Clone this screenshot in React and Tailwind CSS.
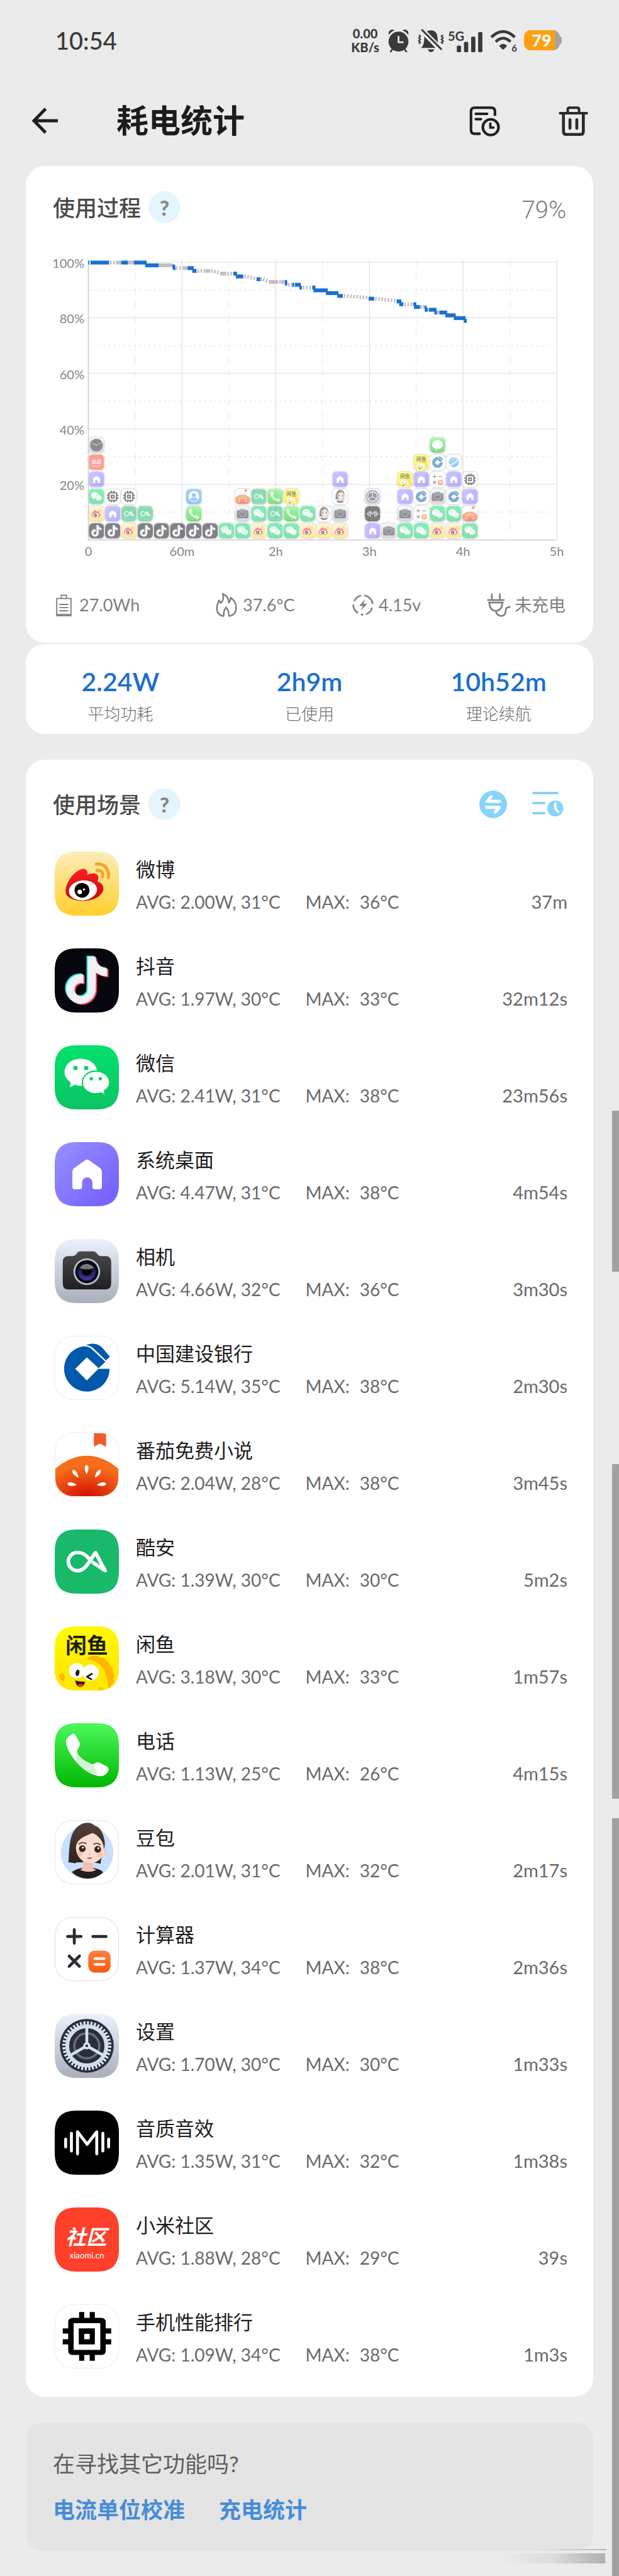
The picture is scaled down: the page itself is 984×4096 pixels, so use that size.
import React from "react";

/* ---------- shared artwork for the application icons ---------- */

function Tile({ id, fill, border, children }) {
  return (
    <symbol id={"app-" + id} viewBox="0 0 100 100">
      <g clipPath="url(#tile-clip)">
        <rect width="100" height="100" fill={fill} />
        {children}
      </g>
      {border ? (
        <rect x="0.5" y="0.5" width="99" height="99" rx="28" fill="none" stroke={border} strokeWidth="1" />
      ) : null}
    </symbol>
  );
}

function Grad({ id, from, to, diagonal }) {
  return (
    <linearGradient id={id} x1="0" y1="0" x2={diagonal ? "1" : "0"} y2="1">
      <stop offset="0" stopColor={from} />
      <stop offset="1" stopColor={to} />
    </linearGradient>
  );
}

const NOTE =
  "M12.525.02c1.31-.02 2.61-.01 3.91-.02.08 1.53.63 3.09 1.75 4.17 1.12 1.11 2.7 1.62 4.24 1.79v4.03c-1.44-.05-2.89-.35-4.2-.97-.57-.26-1.1-.59-1.62-.93-.01 2.92.01 5.84-.02 8.75-.08 1.4-.54 2.79-1.35 3.94-1.31 1.92-3.58 3.17-5.91 3.21-1.43.08-2.86-.31-4.08-1.03-2.02-1.19-3.44-3.37-3.65-5.71-.02-.5-.03-1-.01-1.49.18-1.9 1.12-3.72 2.58-4.96 1.66-1.44 3.98-2.13 6.15-1.72.02 1.48-.04 2.96-.04 4.44-.99-.32-2.15-.23-3.02.37-.63.41-1.11 1.04-1.36 1.75-.21.51-.15 1.07-.14 1.61.24 1.64 1.82 3.02 3.5 2.87 1.12-.01 2.19-.66 2.77-1.61.19-.33.4-.67.41-1.06.1-1.79.06-3.57.07-5.36.01-4.03-.01-8.05.02-12.07z";

function AppSprite() {
  return (
    <svg className="absolute size-0" aria-hidden="true">
      <defs>
        <clipPath id="tile-clip">
          <path d="M0 34 C0 11 11 0 34 0 H66 C89 0 100 11 100 34 V66 C100 89 89 100 66 100 H34 C11 100 0 89 0 66 Z" />
        </clipPath>
        <Grad id="g-weibo" from="#fcedba" to="#ffd02c" />
        <Grad id="g-weibo-red" from="#ff1f24" to="#c9070c" />
        <Grad id="g-wechat" from="#04e16e" to="#0ac463" />
        <Grad id="g-home" from="#9791ff" to="#725cff" diagonal />
        <Grad id="g-steel" from="#ebf2fd" to="#a9afba" />
        <Grad id="g-body" from="#4a4a4c" to="#1f1f20" />
        <Grad id="g-lens" from="#0a0a10" to="#4437a8" />
        <Grad id="g-phone" from="#4cf85e" to="#00b700" />
        <Grad id="g-calc" from="#fd8246" to="#fa5a0e" />
        <Grad id="g-contact" from="#45a9f3" to="#1f86ea" />
        <Grad id="g-fish" from="#fffb00" to="#ffe200" />
        <Grad id="g-globe" from="#53c7ff" to="#1d86ea" />
        <Grad id="g-hair" from="#54403a" to="#2e2220" />
        <radialGradient id="g-tomato" cx="0.5" cy="1" r="0.75">
          <stop offset="0" stopColor="#d40d02" />
          <stop offset="1" stopColor="#f66d1b" />
        </radialGradient>
      </defs>

      <Tile id="weibo" fill="url(#g-weibo)">
        <path d="M17 62 C17 49 28 33 41 27.5 C48 25 53 30 50.5 36.5 C58 32.5 67 33.5 68 39.5 C68.3 42 67.5 44 66.5 46.5 C73 48.500 77 54 75.500 60 C73 70 60 77 43 77 C28 76.500 17 71 17 62Z" fill="url(#g-weibo-red)" />
        <ellipse cx="44" cy="60.500" rx="22" ry="15.500" fill="#fff" transform="rotate(-7 44 60.500)" />
        <circle cx="42.500" cy="60.500" r="11.600" fill="#000" />
        <circle cx="39" cy="63" r="3.600" fill="#fff" />
        <circle cx="45.500" cy="59" r="1.700" fill="#fff" />
        <path d="M65 19.500 C77 18 85.500 28 83.500 40.500" fill="none" stroke="#f6a527" strokeWidth="5" strokeLinecap="round" />
        <path d="M66 29.500 C72 28.500 76.500 33.500 74.500 39" fill="none" stroke="#f6a527" strokeWidth="5" strokeLinecap="round" />
      </Tile>

      <Tile id="douyin" fill="#07080f">
        <path d={NOTE} fill="#25f0e6" transform="translate(11.300 11.500) scale(3.060)" />
        <path d={NOTE} fill="#ee3459" transform="translate(15.300 14.500) scale(3.060)" />
        <path d={NOTE} fill="#f1f0f3" transform="translate(13.300 13) scale(3.060)" />
      </Tile>

      <Tile id="wechat" fill="url(#g-wechat)">
        <path d="M40.500 21 C26 21 15.300 30 15.300 42 C15.300 48.500 19 54 25 58 L23.500 65.500 L31.500 61.500 C35 62.800 38 63.200 41 63.200 C55 63 66 54 66 42 C66 30 55 21 40.500 21Z" fill="#fff" />
        <path d="M64.300 40.300 C76 40.300 85.500 48 85.500 58 C85.500 63.500 82.500 68 77.500 71 L78.500 77.500 L72 74.300 C69.500 75.200 67 75.600 64.300 75.600 C52.500 75.600 43 68 43 58 C43 48 52.500 40.300 64.300 40.300Z" fill="#fff" stroke="#08d267" strokeWidth="2" />
        <circle cx="32.300" cy="35.500" r="3.400" fill="#08d267" />
        <circle cx="49" cy="35.500" r="3.400" fill="#08d267" />
        <circle cx="57" cy="52.300" r="2.700" fill="#08d267" />
        <circle cx="71" cy="52.300" r="2.700" fill="#08d267" />
      </Tile>

      <Tile id="home" fill="url(#g-home)">
        <path d="M46.500 29 Q50.500 25.500 54.500 29 L70 40 Q73.500 43 73.500 47 V69.500 Q73.500 73.500 69.500 73.500 H63 Q58.700 73.500 58.700 70 V63 A8.100 8.100 0 0 0 42.500 63 V70 Q42.500 73.500 38.500 73.500 H31 Q27.500 73.500 27.500 69.500 V47 Q27.500 43 31 40 Z" fill="#fff" />
      </Tile>

      <Tile id="camera" fill="url(#g-steel)">
        <path d="M21 26.600 H28 C31 26.600 32 25.500 34 23 C36 20.500 37 19.400 40 19.400 H60 C63 19.400 64 20.500 66 23 C68 25.500 69 26.600 72 26.600 H79 Q88 26.600 88 36 V69 Q88 78.600 79 78.600 H21 Q12.500 78.600 12.500 69 V36 Q12.500 26.600 21 26.600Z" fill="url(#g-body)" />
        <circle cx="50" cy="51" r="20.800" fill="#b4c1d6" />
        <circle cx="50" cy="51" r="18" fill="#07070c" />
        <circle cx="50" cy="51" r="14" fill="url(#g-lens)" />
        <circle cx="50" cy="49.500" r="8" fill="#030306" />
        <path d="M39 45 Q50 33 61 45 Q50 50 39 45Z" fill="#fff" opacity="0.450" />
      </Tile>

      <Tile id="ccb" fill="#ffffff" border="#ededf0">
        <path d="M85.500 51.500 A35.500 35.500 0 1 1 44 16.500 Q51 15.500 57 20 L79 40.500 L68.500 50.500 L50 33.500 L32 51.500 L50 69.500 L68 51.500Z" fill="#0059ad" />
        <path d="M48 14.800 Q54 11.700 62 12.500 Q69 13.500 74 18.500 L86 32.500 L79.800 38.500 L59 18.500 Q54 14.500 48 14.800Z" fill="#0059ad" />
      </Tile>

      <Tile id="tomato" fill="#ffffff" border="#ededf0">
        <path d="M0 57 Q24 36 50 36 T100 57 V100 H0Z" fill="url(#g-tomato)" />
        <path d="M61 0 H80 V22 L70.500 17 L61 22Z" fill="#ef5a2b" />
        {[[-84, 27, 80.500], [-38, 32.500, 64], [0, 49.700, 57.500], [38, 67, 64], [84, 73, 80.500]].map(([a, x, y]) => (
          <path key={a} d="M0 7.500 C-4 1 -3.500 -7 0 -7 C3.500 -7 4 1 0 7.500Z" fill="#fff" transform={`translate(${x} ${y}) rotate(${a})`} />
        ))}
      </Tile>

      <Tile id="coolapk" fill="#19b96b">
        <path d="M53 45 C47 38 42 35.800 35.500 35.800 A14.200 14.200 0 0 0 35.500 64.300 C49 64.300 55 47 63.500 36 L78.500 64 C72 60 66 55.500 60 51.500" fill="none" stroke="#fff" strokeWidth="5.600" strokeLinecap="round" strokeLinejoin="round" />
      </Tile>

      <Tile id="xianyu" fill="url(#g-fish)">
        <path d="M50 50 Q53 47 60 46 Q68 45 71 49 Q78 48 80 54 Q86 56 86 62 Q92 65 90 71 Q95 76 91 81 Q94 88 88 91 L84 100 H60 Z" fill="#ffb400" />
        <path d="M14 100 V80 Q18 52 46 51 Q82 51 84 100Z" fill="#ffe900" />
        <path d="M7 76 Q12 70 16 77 L14 87 Q6 82 7 76Z" fill="#ffb400" />
        <circle cx="34" cy="69" r="12" fill="#fff" />
        <circle cx="56" cy="72" r="12.500" fill="#fff" />
        <ellipse cx="35.500" cy="72.500" rx="3" ry="5" fill="#1a1616" transform="rotate(12 35.500 72.500)" />
        <path d="M58 74 L50 78.500 L57 82.500" fill="none" stroke="#1a1616" strokeWidth="2.600" strokeLinecap="round" strokeLinejoin="round" />
        <path d="M32 84 Q40 87 47.500 86 Q45 95 39 94.500 Q33 93 32 84Z" fill="#4a0d0a" />
        <path d="M36 91.500 Q40 88 44.500 91.500 Q42 95 39 94.500Z" fill="#ef3a2d" />
        <path d="M66 100 Q67 94 73 94 Q77 95 77 100Z" fill="#ffc800" />
      </Tile>

      <Tile id="phone" fill="url(#g-phone)">
        <path d="M26.500 17.500 Q30 15 32.500 19 L39 30.500 Q40.500 33.500 38 36.500 L35.500 41 Q34 45.500 37 49.500 Q44 58 55 62.500 Q59 65 62.500 62.500 Q66 59.500 70 61.500 L82 68 Q85.500 70.500 83 75 Q78 84 69 82.500 Q50 79 35 62 Q20 45 17.500 30 Q17 23 26.500 17.500Z" fill="#fff" />
        <path d="M32 57 L35.500 44 Q37 52 46 58.500 Q52 63 60 64 L67 80 Q45 76 32 57Z" fill="#7fe987" opacity="0.350" />
      </Tile>

      <Tile id="doubao" fill="#ffffff" border="#e3e4e8">
        <circle cx="50.400" cy="50.500" r="41" fill="#c8e0fd" />
        <path d="M21.500 66 C23 40 23 26 32 14 C42 2 56 2 62 8.500 C72 11 76 22 78 34 C79 46 72 56 71.500 68 L60 66 H34 L32 67.500 Q26 66 21.500 66Z" fill="url(#g-hair)" />
        <path d="M26.500 81 Q36 75 42 75 H62 Q72 77 75.500 81.500 Q64 91.500 50.400 91.500 Q36 91 26.500 81Z" fill="#221d1e" />
        <path d="M44 62 H59 L59.500 75 Q62 77 65 77.500 Q54 84 39 77.500 Q43 77 43.500 74Z" fill="#f3c1ad" />
        <circle cx="77" cy="50.500" r="5" fill="#f6cdbc" />
        <path d="M33 42 C35 28 48 25 59 20 C68 24 77 33 77 48 C76 59 66 67 56 67 C44 67 33 58 33 42Z" fill="#fbdccf" />
        <circle cx="43" cy="44.500" r="5.200" fill="#38231f" />
        <circle cx="67" cy="45.500" r="5.200" fill="#38231f" />
        <circle cx="44" cy="43" r="1.500" fill="#fff" />
        <circle cx="68" cy="44" r="1.500" fill="#fff" />
        <path d="M38 37 Q43 33.500 49 36.500 M61 37.500 Q66 35 71 38.500" fill="none" stroke="#5a3d35" strokeWidth="1.700" strokeLinecap="round" />
        <circle cx="39.500" cy="53" r="4" fill="#f7a99a" opacity="0.500" />
        <circle cx="70" cy="54" r="4" fill="#f7a99a" opacity="0.500" />
        <path d="M50 59 Q54.500 56.500 59 59 Q54.500 63 50 59Z" fill="#d9675b" />
        <path d="M53 53 Q54.500 54.500 56 53" fill="none" stroke="#e0a08c" strokeWidth="1.200" />
      </Tile>

      <Tile id="calc" fill="#ffffff" border="#dedfe2">
        <path d="M20 30.500 H41 M30.500 20 V41 M59.500 30.500 H80 M22.500 61 L38.500 77 M38.500 61 L22.500 77" stroke="#2b2c33" strokeWidth="4.600" strokeLinecap="round" />
        <rect x="52.300" y="52.400" width="34.700" height="34.300" rx="10" fill="url(#g-calc)" />
        <path d="M62.500 65 H77 M62.500 74 H77" stroke="#fff" strokeWidth="4" strokeLinecap="round" />
      </Tile>

      <Tile id="settings" fill="url(#g-steel)">
        <circle cx="50" cy="50" r="42" fill="#2a2e3b" />
        <circle cx="50" cy="50" r="35.500" fill="none" stroke="#dce6f3" strokeWidth="5.400" strokeDasharray="3.100 2.476" />
        <circle cx="50" cy="50" r="30.500" fill="none" stroke="#d3deec" strokeWidth="6" />
        <circle cx="50" cy="50" r="19.500" fill="none" stroke="#686c77" strokeWidth="3.600" />
        <path d="M50 50 V22 M50 50 L25.700 64 M50 50 L74.300 64" stroke="#d6e1ef" strokeWidth="4.500" />
        <circle cx="50" cy="50" r="5.600" fill="#d6e1ef" />
        <circle cx="50" cy="50" r="2" fill="#1b1d25" />
      </Tile>

      <Tile id="sound" fill="#000000">
        <path d="M17 44.500 V56.500 M26 35.500 V63 M75 35.500 V63 M84 44.500 V56.500" stroke="#fff" strokeWidth="4.600" strokeLinecap="round" />
        <path d="M35.500 67.500 V33 L50.500 52.500 L65.500 33 V67.500" fill="none" stroke="#fff" strokeWidth="4.600" strokeLinecap="round" strokeLinejoin="round" />
      </Tile>

      <Tile id="community" fill="#ff402a" />

      <Tile id="cpu" fill="#ffffff" border="#ededf0">
        <path d="M38 12 H46 V21 H54.500 V12 H62.500 V21 H72 Q79.500 21 79.500 28 V37.500 H88 V45.500 H79.500 V54.500 H88 V62.500 H79.500 V72 Q79.500 79 72 79 H62.500 V88 H54.500 V79 H46 V88 H38 V79 H28.500 Q21 79 21 72 V62.500 H12.500 V54.500 H21 V45.500 H12.500 V37.500 H21 V28 Q21 21 28.500 21 H38Z M29.500 29.500 V71 H71 V29.500Z M37.500 37.500 H62.500 V62.500 H37.500Z M46 46 V54.500 H54.500 V46Z" fill="#000" fillRule="evenodd" />
      </Tile>

      <Tile id="clock" fill="url(#g-steel)">
        <circle cx="50" cy="50" r="42" fill="#1d1d1f" />
        <path d="M50 52 L24 39 M50 52 L84 33" stroke="#fff" strokeWidth="3" strokeLinecap="round" />
        <path d="M50 12 V17 M50 83 V88 M12 50 H17 M83 50 H88" stroke="#fff" strokeWidth="2" />
      </Tile>

      <Tile id="contact" fill="url(#g-contact)">
        <circle cx="50" cy="50" r="35" fill="#fff" />
        <circle cx="50" cy="40" r="13" fill="#2f95ee" />
        <path d="M24 70 Q30 56 50 56 Q70 56 76 70 Q66 80 50 80 Q34 80 24 70Z" fill="#2f95ee" />
      </Tile>

      <Tile id="message" fill="url(#g-phone)">
        <path d="M50 18 C69 18 85 30 85 47 C85 64 69 75 52 75 Q44 84 35 84 Q38 79 37 73 C24 69 15 60 15 47 C15 30 31 18 50 18Z" fill="#fff" />
      </Tile>

      <Tile id="browser" fill="#ffffff" border="#dfe0e4">
        <circle cx="51" cy="49" r="33" fill="url(#g-globe)" />
        <path d="M14 80 Q10 72 40 58 Q72 40 86 20 Q92 30 62 54 Q30 78 14 80Z" fill="#d9effc" />
      </Tile>
    </svg>
  );
}

function AppIcon({ name, ...rest }) {
  return (
    <svg viewBox="0 0 100 100" aria-hidden="true" {...rest}>
      <use href={"#app-" + name} />
      {name === "xianyu" ? (
        <text x="50" y="42" textAnchor="middle" fontSize="33" fontWeight="700" fill="#1d1c08" fontFamily="Noto Sans CJK SC">闲鱼</text>
      ) : null}
      {name === "community" ? (
        <>
          <text x="49" y="58" textAnchor="middle" fontSize="32" fontWeight="700" fontStyle="italic" fill="#fff" fontFamily="Noto Sans CJK SC">社区</text>
          <text x="50" y="79" textAnchor="middle" fontSize="13" fill="#fff" fontFamily="Lato">xiaomi.cn</text>
        </>
      ) : null}
    </svg>
  );
}

/* ---------- status bar ---------- */

function StatusBar() {
  return (
    <div className="flex h-[128px] items-center justify-between pr-[91px] pl-[88px] text-[#3a3a3a]">
      <time className="text-[38px] leading-[48px] font-medium">10:54</time>
      <div className="flex items-center">
        <div className="mr-[14px] text-center text-[20px] leading-[22px] font-black">
          <div>0.00</div>
          <div>KB/s</div>
        </div>
        <svg viewBox="0 0 120 136" className="mr-[14px] h-[37px] w-[33px]" fill="#3a3a3a" aria-hidden="true">
          <circle cx="60" cy="74" r="58" />
          <path d="M2 30 A22 22 0 0 1 36 8 Q18 15 4 34Z M118 30 A22 22 0 0 0 84 8 Q102 15 116 34Z" />
          <path d="M24 118 L14 134 M96 118 L106 134" stroke="#3a3a3a" strokeWidth="10" strokeLinecap="round" />
          <path d="M60 46 V78 H84" fill="none" stroke="#ebebeb" strokeWidth="10" strokeLinecap="square" />
        </svg>
        <svg viewBox="0 0 156 136" className="mr-[6px] h-[37px] w-[42px]" aria-hidden="true">
          <path d="M20 112 Q36 98 38 66 C38 24 52 8 78 8 C104 8 118 24 118 66 Q119 98 136 112Z" fill="#3a3a3a" />
          <path d="M60 120 H98 Q92 136 78 136 Q66 136 60 120Z" fill="#3a3a3a" />
          <path d="M16 -2 L148 132" stroke="#ebebeb" strokeWidth="32" />
          <path d="M26 6 L138 118" stroke="#3a3a3a" strokeWidth="11" strokeLinecap="round" />
          <path d="M8 34 L16 43 L6 52 L16 61 L6 70 L16 79 L6 86 M148 34 L140 43 L150 52 L140 61 L150 70 L140 79 L150 86" fill="none" stroke="#3a3a3a" strokeWidth="8" />
        </svg>
        <div className="flex items-start">
          <span className="h-[37px] text-[20px] leading-[22px] font-bold">5G</span>
          <svg viewBox="0 0 150 118" className="mt-[5px] -ml-[12px] h-[32px] w-[41px]" fill="#3a3a3a" aria-hidden="true">
            <rect x="0" y="79" width="25" height="39" rx="6" />
            <rect x="42" y="57" width="25" height="61" rx="6" />
            <rect x="84" y="27" width="25" height="91" rx="6" />
            <rect x="125" y="0" width="25" height="118" rx="6" />
          </svg>
        </div>
        <div className="relative ml-[12px]">
          <svg viewBox="0 0 158 120" className="h-[32px] w-[42px]" aria-hidden="true">
            <path d="M8 42 Q42 8 78 8 Q114 8 148 42" fill="none" stroke="#3a3a3a" strokeWidth="17" />
            <path d="M34 69 Q56 48 78 48 Q100 48 122 69" fill="none" stroke="#3a3a3a" strokeWidth="17" />
            <path d="M54 94 Q66 82 78 82 Q90 82 102 94 L84 113 Q78 118 72 113Z" fill="#3a3a3a" />
          </svg>
          <span className="absolute -right-[1px] -bottom-[4px] text-[15px] leading-[16px] font-bold">6</span>
        </div>
        <div className="ml-[12px] flex items-center">
          <div className="flex h-[32px] w-[57px] overflow-hidden rounded-[11px] bg-[#a3a3a1]">
            <span className="flex w-[49px] items-center justify-center bg-[#fe9f12] pl-[7px] text-[27px] leading-[32px] font-black text-white">79</span>
          </div>
          <span className="h-[12px] w-[3px] rounded-r-[3px] bg-[#a3a3a1]" />
        </div>
      </div>
    </div>
  );
}

/* ---------- title bar ---------- */

function TitleBar() {
  return (
    <header className="mb-[8px] flex h-[128px] items-center pr-[48px] pl-[50px]">
      <button type="button" aria-label="返回" className="mr-[91px]">
        <svg viewBox="0 0 44 44" className="size-[44px]" fill="none" stroke="#1f1f1f" strokeWidth="5" aria-hidden="true">
          <path d="M42 22 H4 M22.500 3 L4 22 L22.500 41" />
        </svg>
      </button>
      <h1 className="flex-1 text-[51px] leading-[64px] font-bold text-[#1c1c1c]">耗电统计</h1>
      <button type="button" aria-label="历史记录" className="mr-[92px]">
        <svg viewBox="0 0 180 180" className="size-[49px]" fill="none" stroke="#1f1f1f" strokeWidth="15" strokeLinecap="round" aria-hidden="true">
          <path d="M150 60 V34 Q150 12 128 12 H32 Q10 12 10 34 V142 Q10 164 32 164 H66" strokeLinecap="butt" />
          <path d="M38 48 H104 M38 79 H68" />
          <circle cx="125" cy="126" r="46" />
          <path d="M123 104 V128 H141" strokeWidth="14" />
        </svg>
      </button>
      <button type="button" aria-label="删除">
        <svg viewBox="0 0 180 180" className="size-[49px]" fill="none" stroke="#2b2b2b" strokeLinecap="round" strokeLinejoin="round" aria-hidden="true">
          <path d="M12 44 H168 M57 42 V22 Q57 12 68 12 H112 Q123 12 123 22 V42" strokeWidth="15" />
          <path d="M32 48 V152 Q32 168 50 168 H130 Q148 168 148 152 V48" strokeWidth="17" />
          <path d="M70 82 V132 M110 82 V132" strokeWidth="17" />
        </svg>
      </button>
    </header>
  );
}

function HelpButton({ label }) {
  return (
    <button type="button" aria-label={label} className="flex size-[51px] items-center justify-center rounded-full bg-[#e5f5fe] text-[33px] leading-[40px] font-black text-[#868686]">
      ?
    </button>
  );
}

/* ---------- battery chart ---------- */

const PLOT = { left: 99.5, right: 844, top: 17, bottom: 458.5 };
const SAMPLES = 1270;
const sampleX = (s) => PLOT.left + ((PLOT.right - PLOT.left) * s) / SAMPLES;
const levelY = (l) => PLOT.bottom - ((PLOT.bottom - PLOT.top) * l) / 100;

/* [first sample, last sample, battery level] while the screen is on */
const SCREEN_ON = [
  [0, 3, 100], [6, 56, 100], [89, 107, 100], [123, 158, 100], [154, 191, 99], [228, 235, 98.6], [229, 236, 98],
  [269, 286, 98], [282, 293, 97], [393, 403, 96], [400, 420, 95], [456, 466, 94], [533, 539, 93], [533, 539, 92.4],
  [553, 558, 92], [560, 576, 92], [572, 579, 91], [607, 616, 91], [610, 649, 90], [644, 678, 89], [675, 690, 88],
  [760, 775, 87], [836, 849, 86], [843, 854, 85], [881, 889, 85], [883, 899, 84], [912, 917, 83.8], [912, 920, 83],
  [924, 944, 83], [938, 945, 82], [952, 973, 82], [968, 996, 81], [991, 1023, 80], [1018, 1026, 79],
];
const IDLE = [
  [75, 89, 100], [107, 123, 100], [191, 228, 99], [256, 269, 98], [318, 330, 97], [357, 374, 96], [466, 471, 94],
  [489, 515, 93], [523, 533, 93], [899, 905, 84], [920, 924, 83], [945, 952, 82],
];
/* [first sample, last sample, level at start, level at end] while asleep */
const ASLEEP = [
  [56, 75, 100, 100], [235, 256, 98, 98], [293, 318, 97, 97], [330, 357, 97, 96.2], [374, 393, 96, 96],
  [420, 456, 95, 94.2], [471, 489, 94, 93.2], [515, 523, 93, 93], [539, 553, 92, 92], [579, 607, 91, 91],
  [690, 760, 88, 87.3], [775, 836, 87, 86.2], [854, 881, 85, 85], [905, 912, 84, 84],
];

const COLUMNS = [
  ["douyin", "weibo", "wechat", "home", "community", "clock"],
  ["douyin", "home", "cpu"],
  ["weibo", "coolapk", "cpu"],
  ["douyin", "coolapk"],
  ["douyin"],
  ["douyin"],
  ["douyin", "phone", "contact"],
  ["douyin"],
  ["wechat"],
  ["wechat", "camera", "tomato"],
  ["weibo", "wechat", "coolapk"],
  ["wechat", "coolapk", "phone"],
  ["wechat", "phone", "xianyu"],
  ["weibo", "wechat"],
  ["weibo", "doubao"],
  ["weibo", "camera", "doubao", "home"],
  [],
  ["home", "sound", "settings"],
  ["camera"],
  ["wechat", "camera", "home", "xianyu"],
  ["wechat", "calc", "ccb", "home", "xianyu"],
  ["weibo", "wechat", "camera", "calc", "ccb", "message"],
  ["weibo", "wechat", "ccb", "home", "browser"],
  ["wechat", "tomato", "home", "cpu"],
];

function BatteryChart() {
  const hour = (PLOT.right - PLOT.left) / 5;
  return (
    <svg viewBox="0 0 902 500" className="mt-[45px] w-full" role="img" aria-label="电量变化" fontFamily="Lato, sans-serif">
      {[100, 80, 60, 40, 20].map((l) => (
        <g key={l}>
          <line x1={PLOT.left} x2={PLOT.right} y1={levelY(l)} y2={levelY(l)} stroke="#e6e6e6" strokeWidth="1.500" />
          <line x1={PLOT.left} x2={PLOT.right} y1={levelY(l - 10)} y2={levelY(l - 10)} stroke="#e8e8e8" strokeWidth="1.500" strokeDasharray="3 5" />
          <text x="93" y={levelY(l) + 9} textAnchor="end" fontSize="20" fill="#868686">{l}%</text>
        </g>
      ))}
      {["0", "60m", "2h", "3h", "4h", "5h"].map((t, i) => (
        <g key={t}>
          <line x1={PLOT.left + i * hour} x2={PLOT.left + i * hour} y1="13" y2={PLOT.bottom} stroke="#e4e4e4" strokeWidth="1.500" />
          {i < 5 ? (
            <line x1={PLOT.left + (i + 0.5) * hour} x2={PLOT.left + (i + 0.5) * hour} y1="13" y2={PLOT.bottom} stroke="#e8e8e8" strokeWidth="1" strokeDasharray="12 10" />
          ) : null}
          <text x={PLOT.left + i * hour} y="484" textAnchor="middle" fontSize="20" fill="#868686">{t}</text>
        </g>
      ))}
      <g opacity="0.500">
        {COLUMNS.map((stack, c) =>
          stack.map((name, r) => (
            <g key={c + "-" + r}>
              <rect x={PLOT.left + c * 25.82} y={457 - 25.6 - r * 27.3} width="25.600" height="25.600" rx="7" fill="#fff" stroke="#bdbdbd" strokeWidth="1.200" />
              <AppIcon name={name} x={PLOT.left + c * 25.82 + 0.6} y={457 - 25 - r * 27.3} width="24.400" height="24.400" />
            </g>
          ))
        )}
      </g>
      <line x1={PLOT.left} x2={PLOT.right} y1={PLOT.bottom} y2={PLOT.bottom} stroke="#cfcfcf" strokeWidth="1.500" />
      <line x1={PLOT.left} x2={PLOT.left} y1="13" y2={PLOT.bottom} stroke="#cfcfcf" strokeWidth="1.500" />
      {IDLE.map(([a, b, l]) => (
        <rect key={"i" + a} x={sampleX(a)} y={levelY(l) - 2.6} width={sampleX(b) - sampleX(a)} height="6" fill="#c0c0c0" />
      ))}
      {ASLEEP.map(([a, b, l, m]) => (
        <line key={"s" + a} x1={sampleX(a) + 1.5} y1={levelY(l) + 0.4} x2={sampleX(b)} y2={levelY(m) + 0.4} stroke="#c0c0c0" strokeWidth="6" strokeDasharray="2.500 2.500" />
      ))}
      {SCREEN_ON.map(([a, b, l]) => (
        <rect key={"o" + a + l} x={sampleX(a)} y={levelY(l) - 2.6} width={sampleX(b) - sampleX(a)} height="6.200" fill="#1a70d3" />
      ))}
    </svg>
  );
}

function ProcessCard() {
  return (
    <section className="rounded-[30px] bg-white pt-[40px] pb-[41px]">
      <div className="flex items-center justify-between px-[43px]">
        <div className="flex items-center gap-[12px]">
          <h2 className="text-[35px] leading-[48px] font-medium text-[#4a4a4a]">使用过程</h2>
          <HelpButton label="使用过程说明" />
        </div>
        <span className="pt-[10px] font-['Roboto'] text-[38px] leading-[41px] font-light text-[#7a7a7a]">79%</span>
      </div>
      <BatteryChart />
      <div className="mt-[43px] grid h-[38px] grid-cols-[254fr_217fr_214fr_127px] items-center pr-[42px] pl-[48px] text-[27px] leading-[38px] text-[#7f7f7f]">
        <div className="flex items-center gap-[12px]">
          <svg viewBox="0 0 24 34" className="h-[35px] w-[25px]" fill="none" stroke="#808080" strokeWidth="1.800" aria-hidden="true">
            <path d="M1 6.500 H23 V33 H1Z M8 6 V1.500 H16 V6 M1 31 H23 M5 15.500 H19 M5 20.500 H19 M5 25.500 H19" />
          </svg>
          <span>27.0Wh</span>
        </div>
        <div className="flex items-center gap-[9px]">
          <svg viewBox="0 0 54 62" className="h-[38px] w-[34px]" fill="none" stroke="#808080" strokeWidth="4" strokeLinejoin="round" aria-hidden="true">
            <path d="M20 60 C8 58 2 50 2 39 C2 30 6 24 8 19 C10 21 11 24 12 26 C19 20 20 11 17 2 C29 7 33 15 33 25 C37 21 38 17 38 12 C48 19 52 28 52 38 C52 50 46 58 33 60 M20 60 C19 50 22 42 26 37 C31 43 34 51 33 60" />
          </svg>
          <span>37.6°C</span>
        </div>
        <div className="flex items-center gap-[8px]">
          <svg viewBox="0 0 44 44" className="size-[34px]" fill="none" stroke="#808080" strokeWidth="3.400" aria-hidden="true">
            <path d="M18 2.500 A20 20 0 0 0 4 14 M2 21 A20 20 0 0 0 12 38.500 M17.500 41.500 A20 20 0 0 0 23 42 M28 41 A20 20 0 0 0 41 27.500 M42 20 A20 20 0 0 0 25 2.200" />
            <path d="M26 10 L14 24 H22 L17 34 L31 19.500 H23Z" fill="#808080" stroke="none" />
          </svg>
          <span>4.15v</span>
        </div>
        <div className="flex items-center gap-[6px]">
          <svg viewBox="0 0 48 48" className="size-[38px] shrink-0" fill="none" stroke="#808080" strokeWidth="3.400" strokeLinecap="round" strokeLinejoin="round" aria-hidden="true">
            <path d="M10 2 V12 M26 2 V12 M2 14 H34 M4 19 H32 M5 19 C5 28 9 35 18 36 C27 35 31 28 31 19 M18 36 C19 43 24 46 29 46 C37 45 38 39 38 34 C38 30 41 28 46 28" />
          </svg>
          <span className="whitespace-nowrap">未充电</span>
        </div>
      </div>
    </section>
  );
}

function SummaryCard() {
  const items = [
    ["2.24W", "平均功耗"],
    ["2h9m", "已使用"],
    ["10h52m", "理论续航"],
  ];
  return (
    <section className="mt-[2px] rounded-[30px] bg-white pt-[34px] pb-[15px]">
      <dl className="grid grid-cols-3 text-center">
        {items.map(([value, label]) => (
          <div key={label} className="flex flex-col-reverse">
            <dt className="mt-[8px] text-[26px] leading-[34px] font-light text-[#6f6f6f]">{label}</dt>
            <dd className="text-[41px] leading-[52px] font-semibold text-[#1b6fd0]">{value}</dd>
          </div>
        ))}
      </dl>
    </section>
  );
}

/* ---------- per-app list ---------- */

const APPS = [
  ["weibo", "微博", "2.00W", 31, 36, "37m"],
  ["douyin", "抖音", "1.97W", 30, 33, "32m12s"],
  ["wechat", "微信", "2.41W", 31, 38, "23m56s"],
  ["home", "系统桌面", "4.47W", 31, 38, "4m54s"],
  ["camera", "相机", "4.66W", 32, 36, "3m30s"],
  ["ccb", "中国建设银行", "5.14W", 35, 38, "2m30s"],
  ["tomato", "番茄免费小说", "2.04W", 28, 38, "3m45s"],
  ["coolapk", "酷安", "1.39W", 30, 30, "5m2s"],
  ["xianyu", "闲鱼", "3.18W", 30, 33, "1m57s"],
  ["phone", "电话", "1.13W", 25, 26, "4m15s"],
  ["doubao", "豆包", "2.01W", 31, 32, "2m17s"],
  ["calc", "计算器", "1.37W", 34, 38, "2m36s"],
  ["settings", "设置", "1.70W", 30, 30, "1m33s"],
  ["sound", "音质音效", "1.35W", 31, 32, "1m38s"],
  ["community", "小米社区", "1.88W", 28, 29, "39s"],
  ["cpu", "手机性能排行", "1.09W", 34, 38, "1m3s"],
];

function AppRow({ icon, name, avg, temp, max, time }) {
  return (
    <li className="flex gap-[27px] py-[26px]">
      <AppIcon name={icon} className="size-[102px] shrink-0" />
      <div className="flex-1 pt-[6px]">
        <h3 className="text-[31px] leading-[44px] text-[#1d1d1d]">{name}</h3>
        <div className="mt-[10px] flex text-[28px] leading-[40px] text-[#6a6a6a]">
          <span className="mr-[40px]">AVG: {avg}, {temp}°C</span>
          <span className="mr-[16px]">MAX:</span>
          <span className="flex-1">{max}°C</span>
          <span className="text-[29px]">{time}</span>
        </div>
      </div>
    </li>
  );
}

function SceneCard() {
  return (
    <section className="mt-[41px] rounded-[30px] bg-white pt-[45px] pb-[19px]">
      <div className="flex items-center px-[43px]">
        <h2 className="mr-[12px] text-[35px] leading-[48px] font-medium text-[#4a4a4a]">使用场景</h2>
        <HelpButton label="使用场景说明" />
        <button type="button" aria-label="切换" className="mr-[40px] ml-auto">
          <svg viewBox="0 0 54 54" className="size-[44px]" aria-hidden="true">
            <circle cx="27" cy="27" r="27" fill="#87d4fb" />
            <path d="M40 21 H15 L23 12 M14 33 H39 L31 42" fill="none" stroke="#fff" strokeWidth="6" strokeLinecap="round" strokeLinejoin="round" />
          </svg>
        </button>
        <button type="button" aria-label="按时间排序" className="mr-[3px]">
          <svg viewBox="0 0 64 52" className="h-[42px] w-[51px]" aria-hidden="true">
            <path d="M2.500 3.500 H50 M2.500 23.500 H24 M2.500 43.500 H24" stroke="#90cff0" strokeWidth="5" strokeLinecap="round" />
            <circle cx="46" cy="34" r="16" fill="#87d4fb" />
            <path d="M46 24 V34 L52 41" fill="none" stroke="#fff" strokeWidth="4.500" strokeLinecap="round" strokeLinejoin="round" />
          </svg>
        </button>
      </div>
      <ul className="mt-[24px] pr-[41px] pl-[46px]">
        {APPS.map(([icon, name, avg, temp, max, time]) => (
          <AppRow key={icon} icon={icon} name={name} avg={avg} temp={temp} max={max} time={time} />
        ))}
      </ul>
    </section>
  );
}

function MoreCard() {
  return (
    <section className="mt-[41px] rounded-[26px] bg-[#e4e4e4] px-[43px] pt-[41px] pb-[42px] text-[35px] leading-[48px]">
      <p className="text-[#5e5e5e]">在寻找其它功能吗?</p>
      <div className="mt-[25px] flex gap-[54px] font-bold text-[#468cd9]">
        <a href="#calibrate">电流单位校准</a>
        <a href="#charging">充电统计</a>
      </div>
    </section>
  );
}

export default function App() {
  return (
    <div className="relative bg-[#ebebeb] pb-[40px] font-['Lato','Noto_Sans_CJK_SC',sans-serif]">
      <AppSprite />
      <StatusBar />
      <TitleBar />
      <main className="mx-[41px]">
        <ProcessCard />
        <SummaryCard />
        <SceneCard />
        <MoreCard />
      </main>
      <div className="absolute top-[1766px] right-0 h-[256px] w-[11px] bg-[#a1a1a1]" />
      <div className="absolute top-[2328px] right-0 h-[532px] w-[11px] bg-[#a1a1a1]" />
      <div className="absolute top-[2891px] right-0 bottom-0 w-[11px] bg-[#a1a1a1]" />
      <div className="absolute right-[20px] bottom-[41px] h-[2px] w-[110px] bg-linear-to-r from-transparent to-[#b5b5b5]" />
      <div className="absolute right-[22px] bottom-[20px] h-[16px] w-[164px] bg-linear-to-r from-transparent via-[#dcdcdc] to-[#b0b0b0]" />
    </div>
  );
}
